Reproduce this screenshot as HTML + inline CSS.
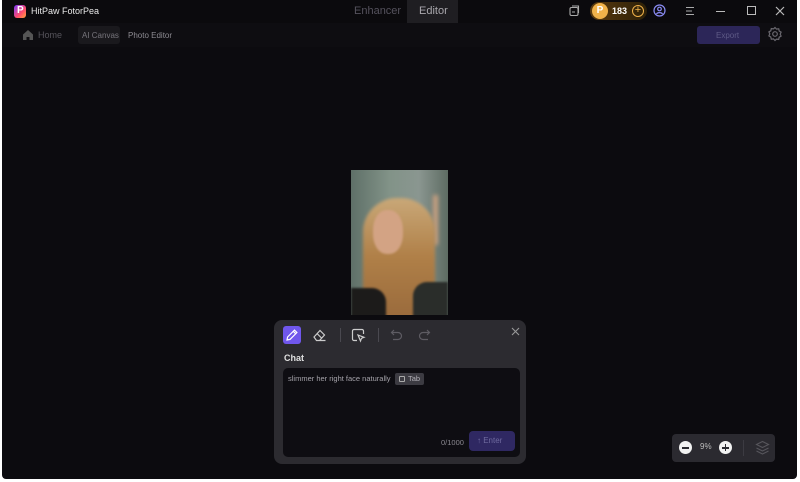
<!DOCTYPE html>
<html><head><meta charset="utf-8"><style>
*{margin:0;padding:0;box-sizing:border-box}
body{width:800px;height:482px;background:#fff;position:relative;overflow:hidden;font-family:"Liberation Sans",sans-serif}
.win{position:absolute;left:2px;top:0;width:795px;height:479px;background:#0c0b0f;border-radius:0 0 4px 4px;overflow:hidden}
.t{position:absolute;color:#ddd;font-size:10px;white-space:nowrap}
</style></head><body>
<div class="win">
 <div style="position:absolute;left:0;top:0;width:795px;height:23px;background:#0b0a0d"></div>
 <div style="position:absolute;left:0;top:23px;width:795px;height:24px;background:#0e0d11"></div>
 <div style="position:absolute;left:12px;top:5px;width:12px;height:13px;border-radius:3px;background:linear-gradient(135deg,#7a3cff,#ff4a6e 60%,#ffa53a)"></div>
 <div class="t" style="left:15px;top:5px;font-weight:bold;color:#fff;font-size:10px">P</div>
 <div class="t" style="left:29px;top:6px;font-size:9px;color:#e8e8e8">HitPaw FotorPea</div>
 <div class="t" style="left:352px;top:5px;font-size:11px;color:#55525d">Enhancer</div>
 <div style="position:absolute;left:405px;top:0;width:51px;height:23px;background:#1f1e22"></div>
 <div class="t" style="left:417px;top:5px;font-size:11px;color:#a9a7ad">Editor</div>
 <svg style="position:absolute;left:566px;top:5px" width="12" height="12" viewBox="0 0 12 12" fill="none" stroke="#aaa" stroke-width="1.1"><rect x="2" y="2.5" width="8" height="8" rx="1.5"/><path d="M4 1h6.5v7M4 7h3"/></svg>
 <div style="position:absolute;left:588px;top:2px;width:57px;height:18px;border-radius:9px;background:linear-gradient(90deg,#5a3a0e,#2c2008)"></div>
 <div style="position:absolute;left:590px;top:3px;width:16px;height:16px;border-radius:50%;background:#f0b24a;color:#fff;font-size:10px;font-weight:bold;text-align:center;line-height:16px">P</div>
 <div class="t" style="left:610px;top:6px;font-size:9px;font-weight:bold;color:#fff">183</div>
 <div style="position:absolute;left:630px;top:5px;width:12px;height:12px;border-radius:50%;border:1.2px solid #f0b24a;color:#f0b24a;font-size:11px;line-height:9px;text-align:center">+</div>
 <svg style="position:absolute;left:651px;top:4px" width="13" height="13" viewBox="0 0 13 13" fill="none" stroke="#8b8cf5" stroke-width="1.2"><circle cx="6.5" cy="6.5" r="5.5"/><circle cx="6.5" cy="5" r="1.8"/><path d="M3.5 10c1-1.8 5-1.8 6 0"/></svg>
 <svg style="position:absolute;left:683px;top:6px" width="10" height="10" stroke="#aaa" stroke-width="1.1"><path d="M1 1.5h8M1 5h6M1 8.5h8"/></svg>
 <div style="position:absolute;left:714px;top:11px;width:9px;height:1.2px;background:#bbb"></div>
 <div style="position:absolute;left:745px;top:6px;width:9px;height:9px;border:1.2px solid #bbb"></div>
 <svg style="position:absolute;left:773px;top:6px" width="10" height="10" stroke="#bbb" stroke-width="1.2"><path d="M1 1l8 8M9 1l-8 8"/></svg>
 <svg style="position:absolute;left:21px;top:30px" width="10" height="10" fill="#555"><path d="M5 0l5 4.5V10H6.5V7h-3v3H0V4.5z"/></svg>
 <div class="t" style="left:36px;top:30px;font-size:9px;color:#56545b">Home</div>
 <div style="position:absolute;left:76px;top:26px;width:42px;height:18px;background:#1a191d;border-radius:3px"></div>
 <div class="t" style="left:80px;top:31px;font-size:8px;color:#77757c">AI Canvas</div>
 <div class="t" style="left:126px;top:31px;font-size:8px;color:#8d8b92">Photo Editor</div>
 <div style="position:absolute;left:695px;top:26px;width:63px;height:18px;background:#2c2658;border-radius:3px"></div>
 <div class="t" style="left:714px;top:31px;font-size:8px;color:#5e5a86">Export</div>
 <svg style="position:absolute;left:765px;top:26px" width="16" height="16" viewBox="0 0 16 16" fill="none" stroke="#6a686f" stroke-width="1.2"><path d="M8 1.5l1.5 1.6 2.2-.3.5 2.2 1.9 1.1-.9 2 .9 2-1.9 1.1-.5 2.2-2.2-.3L8 14.5l-1.5-1.6-2.2.3-.5-2.2-1.9-1.1.9-2-.9-2 1.9-1.1.5-2.2 2.2.3z"/><circle cx="8" cy="8" r="2.3"/></svg>
 <!-- photo -->
 <div style="position:absolute;left:349px;top:170px;width:97px;height:145px;background:linear-gradient(90deg,#5f7068,#829388 40%,#8a9690 70%,#5e6c63);overflow:hidden">
  <div style="position:absolute;left:82px;top:25px;width:5px;height:50px;background:#c9a080;filter:blur(2px)"></div>
  <div style="position:absolute;left:12px;top:28px;width:72px;height:130px;border-radius:34px 34px 6px 6px;background:linear-gradient(180deg,#c9a878,#b08048 45%,#96673a);filter:blur(1.5px)"></div>
  <div style="position:absolute;left:22px;top:40px;width:30px;height:44px;border-radius:45%;background:#d3a384;filter:blur(1px)"></div>
  <div style="position:absolute;left:0;top:118px;width:35px;height:30px;background:#1c1b1a;border-radius:0 14px 0 0;filter:blur(1px)"></div>
  <div style="position:absolute;left:62px;top:112px;width:35px;height:36px;background:#2a2d2a;border-radius:14px 0 0 0;filter:blur(1px)"></div>
 </div>
 <!-- chat panel -->
 <div style="position:absolute;left:272px;top:320px;width:252px;height:144px;background:#2c2b30;border-radius:8px">
  <div style="position:absolute;left:9px;top:6px;width:18px;height:18px;background:#7057ec;border-radius:3px"></div>
  <svg style="position:absolute;left:11px;top:8px" width="14" height="14" viewBox="0 0 14 14" fill="none" stroke="#fff" stroke-width="1.2"><path d="M2 12l.6-3L9.5 2.1l2.4 2.4L5 11.4z M8.3 3.3l2.4 2.4"/></svg>
  <svg style="position:absolute;left:38px;top:8px" width="15" height="14" viewBox="0 0 15 14" fill="none" stroke="#ccc" stroke-width="1.2"><path d="M2 9l6-6.5 4.5 4.5-5 5.5H4.5z M5 5.5l4.5 4.5 M7.5 12.5h6"/></svg>
  <div style="position:absolute;left:66px;top:8px;width:1px;height:14px;background:#4a4950"></div>
  <svg style="position:absolute;left:77px;top:8px" width="15" height="15" viewBox="0 0 15 15" fill="none" stroke="#ccc" stroke-width="1.2"><path d="M6 12.5H3a1.5 1.5 0 0 1-1.5-1.5V3A1.5 1.5 0 0 1 3 1.5h8A1.5 1.5 0 0 1 12.5 3v3"/><path d="M7 7l6 2.3-2.5 1-1 2.7z"/></svg>
  <div style="position:absolute;left:104px;top:8px;width:1px;height:14px;background:#4a4950"></div>
  <svg style="position:absolute;left:116px;top:9px" width="13" height="12" viewBox="0 0 13 12" fill="none" stroke="#5e5c63" stroke-width="1.2"><path d="M4 1L1.5 3.5 4 6M1.5 3.5H8a3.5 3.5 0 0 1 0 7H3"/></svg>
  <svg style="position:absolute;left:144px;top:9px" width="13" height="12" viewBox="0 0 13 12" fill="none" stroke="#5e5c63" stroke-width="1.2"><path d="M9 1l2.5 2.5L9 6M11.5 3.5H5a3.5 3.5 0 0 0 0 7h5"/></svg>
  <svg style="position:absolute;left:237px;top:7px" width="9" height="9" stroke="#999" stroke-width="1.1"><path d="M1 1l7 7M8 1l-7 7"/></svg>
  <div class="t" style="left:10px;top:33px;font-size:9px;font-weight:bold;color:#e0e0e0">Chat</div>
  <div style="position:absolute;left:9px;top:48px;width:237px;height:89px;background:#0e0d12;border-radius:5px">
   <div class="t" style="left:5px;top:6px;font-size:7.5px;color:#a5a3aa">slimmer her right face naturally</div>
   <div style="position:absolute;left:112px;top:5px;width:29px;height:12px;background:#3c3b42;border-radius:2px"></div>
   <div style="position:absolute;left:116px;top:7.5px;width:6px;height:6px;border:1px solid #aaa;border-radius:1px"></div>
   <div class="t" style="left:125px;top:6px;font-size:7.5px;color:#b0aeb5">Tab</div>
   <div class="t" style="left:158px;top:70px;font-size:7.5px;color:#8a8890">0/1000</div>
   <div style="position:absolute;left:186px;top:63px;width:46px;height:20px;background:#2f2862;border-radius:4px"></div>
   <div class="t" style="left:194px;top:68px;font-size:8px;color:#6f6a9f">↑ Enter</div>
  </div>
 </div>
 <!-- zoom -->
 <div style="position:absolute;left:670px;top:434px;width:103px;height:28px;background:#2b2a30;border-radius:4px">
  <div style="position:absolute;left:7px;top:7px;width:13px;height:13px;border-radius:50%;background:#f2f2f2"></div>
  <div style="position:absolute;left:10px;top:13px;width:7px;height:1.5px;background:#2b2a30"></div>
  <div class="t" style="left:28px;top:8px;font-size:8px;color:#bbb">9%</div>
  <div style="position:absolute;left:47px;top:7px;width:13px;height:13px;border-radius:50%;background:#f2f2f2"></div>
  <div style="position:absolute;left:50px;top:13px;width:7px;height:1.5px;background:#2b2a30"></div>
  <div style="position:absolute;left:52.8px;top:10px;width:1.5px;height:7px;background:#2b2a30"></div>
  <div style="position:absolute;left:71px;top:6px;width:1px;height:16px;background:#3c3b42"></div>
  <svg style="position:absolute;left:83px;top:6px" width="15" height="16" viewBox="0 0 15 16" fill="none" stroke="#57565c" stroke-width="1.1"><path d="M7.5 1.5l6 3-6 3-6-3z M1.5 8l6 3 6-3 M1.5 11l6 3 6-3"/></svg>
 </div>
</div>
</body></html>
